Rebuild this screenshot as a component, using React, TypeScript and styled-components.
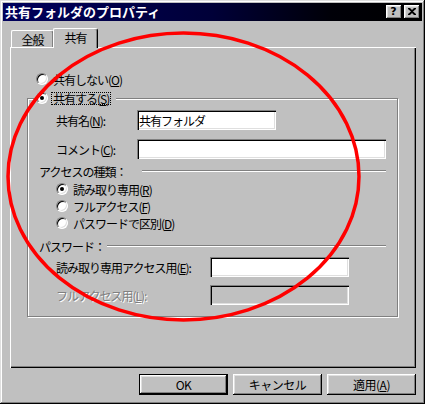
import React from 'react';
import styled, { createGlobalStyle } from 'styled-components';

const GlobalStyle = createGlobalStyle`
  html, body { margin: 0; padding: 0; background: #c0c0c0; }
  body {
    font-family: "Noto Sans CJK JP", "Noto Sans", sans-serif;
    font-size: 12px;
    color: #000;
  }
  * { box-sizing: border-box; }
`;

const raised = `
  box-shadow: inset -1px -1px 0 #000, inset 1px 1px 0 #fff,
    inset -2px -2px 0 #808080, inset 2px 2px 0 #dfdfdf;
`;

const Window = styled.div`
  position: relative;
  width: 425px;
  height: 404px;
  background: #c0c0c0;
  padding: 3px;
  display: flex;
  flex-direction: column;
  box-shadow: inset -1px -1px 0 #000, inset 1px 1px 0 #dfdfdf,
    inset -2px -2px 0 #808080, inset 2px 2px 0 #fff;
`;

const TitleBar = styled.div`
  height: 18px;
  flex: none;
  display: flex;
  align-items: center;
  padding: 0 2px 0 2px;
  background: linear-gradient(90deg, #00005c 0%, #000038 50%, #000008 78%, #000 100%);
`;

const Title = styled.span`
  color: #fff;
  font-weight: bold;
  font-size: 13px;
  letter-spacing: 0;
  line-height: 18px;
`;

const TitleButtons = styled.div`
  margin-left: auto;
  display: flex;
  gap: 2px;
`;

const TitleButton = styled.div`
  width: 16px;
  height: 14px;
  background: #c0c0c0;
  display: flex;
  align-items: center;
  justify-content: center;
  font-family: "DejaVu Sans", sans-serif;
  font-weight: bold;
  font-size: 11px;
  line-height: 14px;
  padding: 0 1px 1px 0;
  ${raised}
`;

const Content = styled.div`
  flex: 1;
  display: flex;
  flex-direction: column;
  padding: 7px 6px 0 7px;
`;

const TabRow = styled.div`
  height: 20px;
  display: flex;
  align-items: flex-end;
  padding-left: 1px;
`;

const Tab = styled.div<{ $active?: boolean }>`
  position: relative;
  z-index: ${(p) => (p.$active ? 2 : 0)};
  width: ${(p) => (p.$active ? 45 : 43)}px;
  height: ${(p) => (p.$active ? 20 : 18)}px;
  margin-right: ${(p) => (p.$active ? 0 : -1)}px;
  display: flex;
  align-items: center;
  justify-content: center;
  padding-bottom: ${(p) => (p.$active ? 2 : 1)}px;
  background: #c0c0c0;
  border-top: 1px solid #fff;
  border-left: 1px solid #fff;
  border-right: 1px solid #000;
  border-radius: 2px 3px 0 0;
  box-shadow: inset -1px 0 0 #808080;
  letter-spacing: -1px;
`;

const Panel = styled.div`
  position: relative;
  z-index: 1;
  margin-top: -1px;
  height: 321px;
  padding: 24px 18px 0 17px;
  display: flex;
  flex-direction: column;
  box-shadow: inset 1px 1px 0 #fff, inset -1px -1px 0 #000, inset -2px -2px 0 #808080;
`;

const Radio = styled.span<{ $checked?: boolean }>`
  position: relative;
  flex: none;
  width: 12px;
  height: 12px;
  border-radius: 50%;
  background: #fff;
  border: 1px solid;
  border-color: #808080 #fff #fff #808080;
  box-shadow: inset 1px 1px 0 #000, inset -1px -1px 0 #dfdfdf;
  &::after {
    content: '';
    display: ${(p) => (p.$checked ? 'block' : 'none')};
    position: absolute;
    left: 3px;
    top: 3px;
    width: 4px;
    height: 4px;
    border-radius: 50%;
    background: #000;
  }
`;

const RadioRow = styled.div<{ $indent: number }>`
  display: flex;
  align-items: center;
  gap: 5px;
  height: 16px;
  padding-left: ${(p) => p.$indent}px;
  letter-spacing: -1px;
  white-space: nowrap;
`;

const Group = styled.fieldset`
  margin: 3px 0 0 0;
  min-width: 0;
  border: 1px solid #808080;
  padding: 2px 11px 11px 11px;
  box-shadow: inset 1px 1px 0 #fff, 1px 1px 0 #fff;
  display: flex;
  flex-direction: column;
`;

const Legend = styled.legend`
  margin-left: -5px;
  padding: 0 5px 0 2px;
  height: 16px;
  display: flex;
  align-items: center;
  background: #c0c0c0;
  letter-spacing: -1px;
  white-space: nowrap;
`;

const FocusLabel = styled.span`
  margin-left: 3px;
  height: 13px;
  padding: 0 1px;
  border: 1px dotted #000;
  display: flex;
  align-items: center;
`;

const FieldRow = styled.div<{ $mt: number }>`
  display: flex;
  align-items: center;
  height: 20px;
  margin-top: ${(p) => p.$mt}px;
  margin-left: 17px;
`;

const FieldLabel = styled.span<{ $w: number; $disabled?: boolean }>`
  flex: none;
  width: ${(p) => p.$w}px;
  letter-spacing: -1px;
  white-space: nowrap;
  color: ${(p) => (p.$disabled ? '#808080' : '#000')};
  text-shadow: ${(p) => (p.$disabled ? '1px 1px 0 #fff' : 'none')};
`;

const TextBox = styled.div<{ $w?: number; $disabled?: boolean }>`
  height: 20px;
  ${(p) => (p.$w ? `width: ${p.$w}px; flex: none;` : 'flex: 1;')}
  background: ${(p) => (p.$disabled ? '#c0c0c0' : '#fff')};
  display: flex;
  align-items: center;
  padding: 1px 2px 0 2px;
  letter-spacing: -1px;
  white-space: nowrap;
  box-shadow: inset 1px 1px 0 #808080, inset 2px 2px 0 #000,
    inset -1px -1px 0 #fff, inset -2px -2px 0 #dfdfdf;
`;

const Header = styled.div<{ $mt: number; $labelW: number }>`
  display: flex;
  align-items: center;
  height: 16px;
  margin-top: ${(p) => p.$mt}px;
  & > span {
    flex: none;
    width: ${(p) => p.$labelW}px;
    letter-spacing: -1px;
    white-space: nowrap;
  }
`;

const Rule = styled.div`
  flex: 1;
  height: 2px;
  margin-top: -1px;
  border-top: 1px solid #808080;
  border-bottom: 1px solid #fff;
`;

const RadioList = styled.div`
  display: flex;
  flex-direction: column;
  gap: 1px;
  margin-top: 2px;
`;

const ButtonRow = styled.div`
  display: flex;
  justify-content: flex-end;
  gap: 5px;
  margin-top: 6px;
`;

const PushButton = styled.div<{ $default?: boolean }>`
  width: 89px;
  height: 21px;
  display: flex;
  align-items: center;
  justify-content: center;
  padding-bottom: 1px;
  background: #c0c0c0;
  letter-spacing: -0.5px;
  border: ${(p) => (p.$default ? '1px solid #000' : 'none')};
  ${raised}
`;

const Annotation = styled.svg`
  position: absolute;
  left: 0;
  top: 0;
  pointer-events: none;
  z-index: 10;
`;

export default function App() {
  return (
    <>
      <GlobalStyle />
      <Window>
        <TitleBar>
          <Title>共有フォルダのプロパティ</Title>
          <TitleButtons>
            <TitleButton>?</TitleButton>
            <TitleButton>
              <svg width="8" height="7" viewBox="0 0 8 7">
                <path d="M0 0h2l2 2 2-2h2v1L5 3.5 8 6v1H6L4 5 2 7H0V6l3-2.5L0 1z" fill="#000" />
              </svg>
            </TitleButton>
          </TitleButtons>
        </TitleBar>
        <Content>
          <TabRow>
            <Tab>全般</Tab>
            <Tab $active>共有</Tab>
          </TabRow>
          <Panel>
            <RadioRow $indent={9}>
              <Radio />
              <span>
                共有しない(<u>O</u>)
              </span>
            </RadioRow>
            <Group>
              <Legend>
                <Radio $checked />
                <FocusLabel>
                  共有する(<u>S</u>)
                </FocusLabel>
              </Legend>
              <FieldRow $mt={2}>
                <FieldLabel $w={81}>
                  共有名(<u>N</u>):
                </FieldLabel>
                <TextBox $w={139}>共有フォルダ</TextBox>
              </FieldRow>
              <FieldRow $mt={9}>
                <FieldLabel $w={81}>
                  コメント(<u>C</u>):
                </FieldLabel>
                <TextBox />
              </FieldRow>
              <Header $mt={4} $labelW={103}>
                <span>アクセスの種類：</span>
                <Rule />
              </Header>
              <RadioList>
                <RadioRow $indent={17}>
                  <Radio $checked />
                  <span>
                    読み取り専用(<u>R</u>)
                  </span>
                </RadioRow>
                <RadioRow $indent={17}>
                  <Radio />
                  <span>
                    フルアクセス(<u>F</u>)
                  </span>
                </RadioRow>
                <RadioRow $indent={17}>
                  <Radio />
                  <span>
                    パスワードで区別(<u>D</u>)
                  </span>
                </RadioRow>
              </RadioList>
              <Header $mt={7} $labelW={68}>
                <span>パスワード：</span>
                <Rule />
              </Header>
              <FieldRow $mt={3}>
                <FieldLabel $w={154}>
                  読み取り専用アクセス用(<u>E</u>):
                </FieldLabel>
                <TextBox $w={139} />
              </FieldRow>
              <FieldRow $mt={8}>
                <FieldLabel $w={154} $disabled>
                  フルアクセス用(<u>L</u>):
                </FieldLabel>
                <TextBox $w={139} $disabled />
              </FieldRow>
            </Group>
          </Panel>
          <ButtonRow>
            <PushButton $default>OK</PushButton>
            <PushButton>キャンセル</PushButton>
            <PushButton>
              適用(<u>A</u>)
            </PushButton>
          </ButtonRow>
        </Content>
        <Annotation width="425" height="404" viewBox="0 0 425 404">
          <ellipse cx="183.5" cy="176.5" rx="175.5" ry="143.5" fill="none" stroke="#ff0000" strokeWidth="3.5" />
        </Annotation>
      </Window>
    </>
  );
}
